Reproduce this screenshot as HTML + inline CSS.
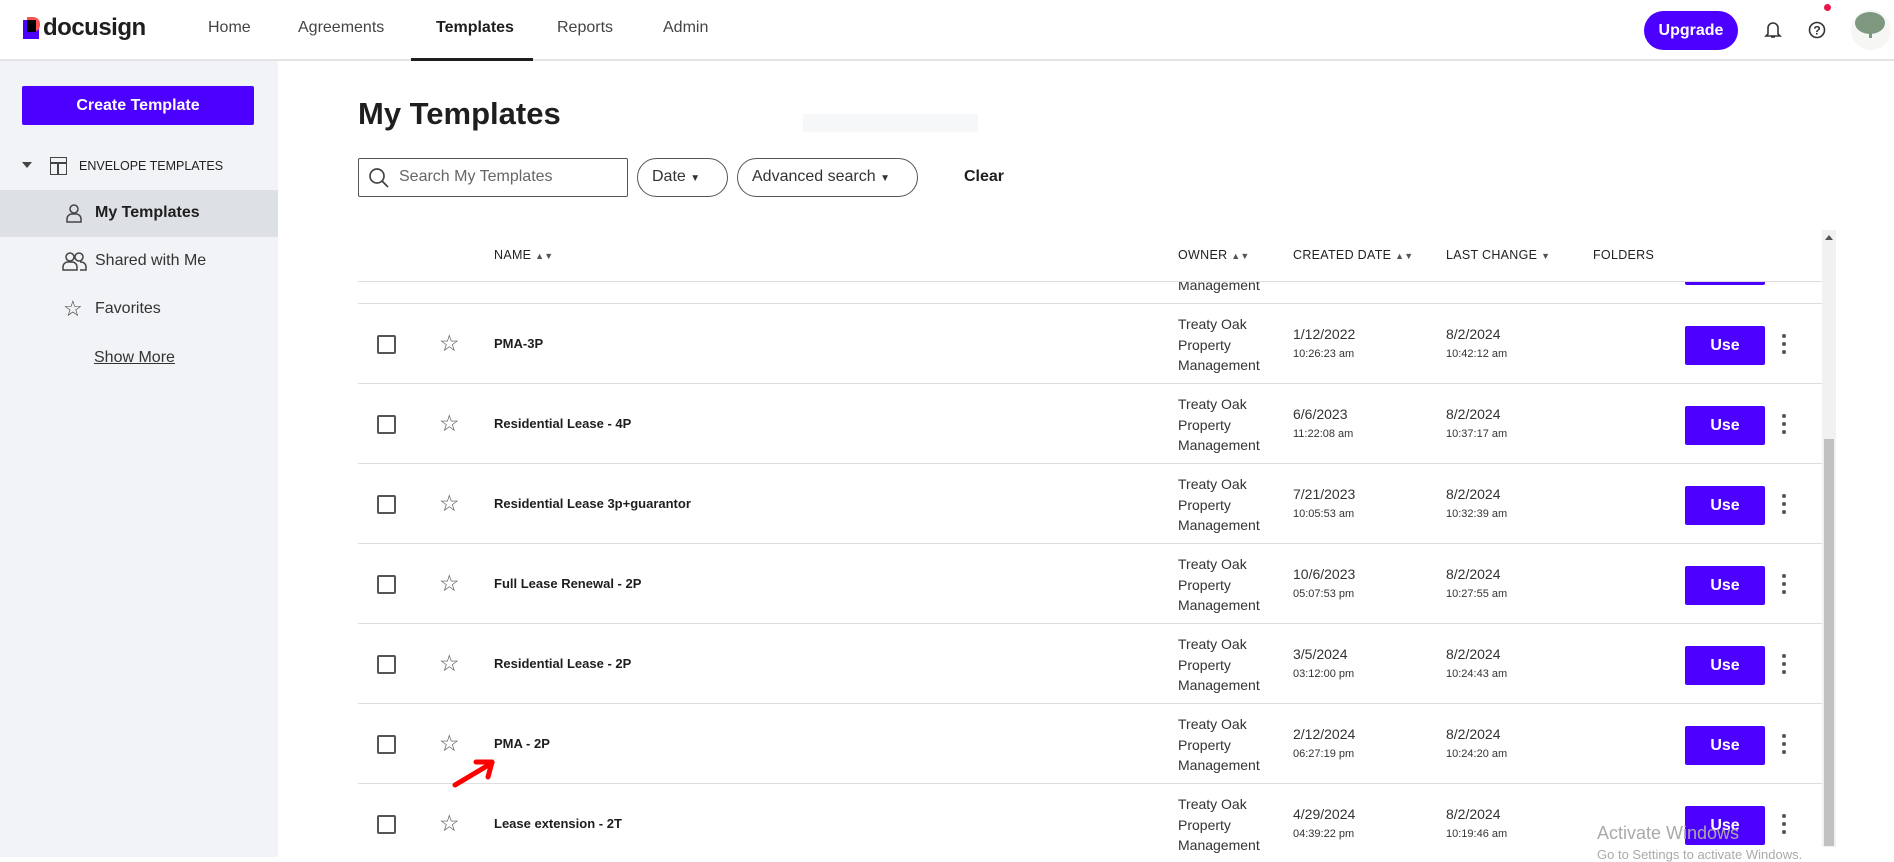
<!DOCTYPE html>
<html><head><meta charset="utf-8"><style>
*{box-sizing:border-box;margin:0;padding:0}
body{width:1894px;height:857px;overflow:hidden;background:#fff;font-family:"Liberation Sans",sans-serif;color:#1e1e1e;position:relative}
.a{position:absolute}
.hdr{left:0;top:0;width:1894px;height:61px;border-bottom:2px solid #e4e4e4;background:#fff}
.nav{top:19px;font-size:16px;color:#444}
.side{left:0;top:61px;width:278px;height:796px;background:#f1f3f6}
.btn{background:#4c00ff;color:#fff;font-weight:bold;text-align:center;border-radius:2px}
.pill{border:1px solid #555;border-radius:20px;height:39px;top:158px;font-size:16px;color:#333;padding:9px 14px}
.th{top:248px;font-size:12.5px;color:#222;letter-spacing:.3px}
.row{left:0;width:1464px;height:80px;border-bottom:1px solid #ddd}
.cb{left:19px;top:31px;width:19px;height:19px;border:2px solid #555;border-radius:2px}
.star{left:81px;top:26px;font-size:23px;color:#555}
.nm{left:136px;top:32px;font-weight:bold;font-size:13px}
.ow{left:820px;top:10px;font-size:14px;line-height:20.5px;color:#333}
.dt{font-size:14px;color:#333;top:22px}
.tm{font-size:11px;color:#333;top:44px}
.use{left:1327px;top:22px;width:80px;height:39px;line-height:39px;font-size:16px}
.keb{left:1424px;top:30px;width:4px}
.keb i{display:block;width:4px;height:4px;border-radius:2px;background:#555;margin-bottom:4px}
</style></head><body>
<div class="a hdr"></div>
<div class="a" style="left:23px;top:20px;width:16px;height:19px;background:#4c00ff"></div>
<div class="a" style="left:27px;top:17px;width:13px;height:15px;background:#ff5252;border-radius:0 7px 7px 0"></div>
<div class="a" style="left:27px;top:20px;width:9px;height:12px;background:#000"></div>
<div class="a" style="left:43px;top:14px;font-size:24px;font-weight:bold;letter-spacing:-.5px">docusign</div>
<div class="a nav" style="left:208px">Home</div>
<div class="a nav" style="left:298px">Agreements</div>
<div class="a nav" style="left:436px;color:#1e1e1e;font-weight:bold">Templates</div>
<div class="a" style="left:411px;top:58px;width:122px;height:3px;background:#1e1e1e"></div>
<div class="a nav" style="left:557px">Reports</div>
<div class="a nav" style="left:663px">Admin</div>
<div class="a btn" style="left:1644px;top:11px;width:94px;height:39px;border-radius:20px;line-height:39px;font-size:16px">Upgrade</div>
<svg class="a" style="left:1764px;top:20px" width="18" height="20" viewBox="0 0 18 20"><path d="M4 14V8a5 5 0 0 1 10 0v6l2 2H2z M7 17h4" fill="none" stroke="#333" stroke-width="1.6"/></svg>
<svg class="a" style="left:1807px;top:20px" width="20" height="20"><circle cx="10" cy="10" r="7.5" fill="none" stroke="#333" stroke-width="1.6"/><text x="10" y="14.5" font-size="12" font-weight="bold" text-anchor="middle" fill="#333" font-family="Liberation Sans">?</text></svg>
<div class="a" style="left:1824px;top:4px;width:7px;height:7px;border-radius:4px;background:#e8174a"></div>
<div class="a" style="left:1851px;top:10px;width:40px;height:40px;border-radius:20px;background:#f6f6f4"></div>
<div class="a" style="left:1855px;top:12px;width:30px;height:22px;border-radius:50%;background:#7e9880"></div>
<div class="a" style="left:1869px;top:30px;width:3px;height:8px;background:#7e9880"></div>

<div class="a side"></div>
<div class="a btn" style="left:22px;top:86px;width:232px;height:39px;line-height:39px;font-size:16px">Create Template</div>
<div class="a" style="left:22px;top:162px;border-left:5px solid transparent;border-right:5px solid transparent;border-top:6px solid #444"></div>
<div class="a" style="left:50px;top:157px;width:17px;height:18px;border:1.5px solid #444"></div>
<div class="a" style="left:50px;top:162px;width:17px;height:1.5px;background:#444"></div>
<div class="a" style="left:57px;top:162px;width:1.5px;height:13px;background:#444"></div>
<div class="a" style="left:79px;top:159px;font-size:12.5px;color:#222">ENVELOPE TEMPLATES</div>
<div class="a" style="left:0;top:190px;width:278px;height:47px;background:#dde0e4"></div>
<svg class="a" style="left:65px;top:203px" width="18" height="20"><circle cx="9" cy="6" r="4" fill="none" stroke="#444" stroke-width="1.5"/><path d="M2 19v-3a5 5 0 0 1 5-5h4a5 5 0 0 1 5 5v3z" fill="none" stroke="#444" stroke-width="1.5"/></svg>
<div class="a" style="left:95px;top:204px;font-size:16px;font-weight:bold">My Templates</div>
<svg class="a" style="left:62px;top:251px" width="26" height="20"><circle cx="8" cy="6" r="4" fill="none" stroke="#444" stroke-width="1.5"/><path d="M1 19v-3a5 5 0 0 1 5-5h4a5 5 0 0 1 5 5v3z" fill="none" stroke="#444" stroke-width="1.5"/><circle cx="17" cy="6" r="4" fill="none" stroke="#444" stroke-width="1.5"/><path d="M18 11h1a5 5 0 0 1 5 5v3h-6" fill="none" stroke="#444" stroke-width="1.5"/></svg>
<div class="a" style="left:95px;top:252px;font-size:16px;color:#333">Shared with Me</div>
<div class="a" style="left:63px;top:296px;font-size:22px;color:#444">☆</div>
<div class="a" style="left:95px;top:300px;font-size:16px;color:#333">Favorites</div>
<div class="a" style="left:94px;top:349px;font-size:16px;color:#333;text-decoration:underline">Show More</div>

<div class="a" style="left:358px;top:96px;font-size:31px;font-weight:bold">My Templates</div>
<div class="a" style="left:803px;top:114px;width:175px;height:18px;background:#f6f7f9"></div>
<div class="a" style="left:358px;top:158px;width:270px;height:39px;border:1px solid #555;border-radius:2px"></div>
<svg class="a" style="left:368px;top:167px" width="22" height="22"><circle cx="9" cy="9" r="7" fill="none" stroke="#444" stroke-width="1.7"/><path d="M14 14l6 6" stroke="#444" stroke-width="1.8"/></svg>
<div class="a" style="left:399px;top:168px;font-size:16px;color:#666">Search My Templates</div>
<div class="a pill" style="left:637px;width:91px">Date <span style="font-size:10px">▼</span></div>
<div class="a pill" style="left:737px;width:181px">Advanced search <span style="font-size:10px">▼</span></div>
<div class="a" style="left:964px;top:168px;font-size:16px;font-weight:bold">Clear</div>

<div class="a" style="left:358px;top:282px;width:1464px;height:575px;overflow:hidden">
 <div class="a row" style="top:-58px"><div class="a ow">Treaty Oak<br>Property<br>Management</div><div class="a btn use">Use</div></div>
 <div class="a row" style="top:22px"><div class="a cb"></div><div class="a star">☆</div><div class="a nm">PMA-3P</div><div class="a ow">Treaty Oak<br>Property<br>Management</div><div class="a dt" style="left:935px">1/12/2022</div><div class="a tm" style="left:935px">10:26:23 am</div><div class="a dt" style="left:1088px">8/2/2024</div><div class="a tm" style="left:1088px">10:42:12 am</div><div class="a btn use">Use</div><div class="a keb"><i></i><i></i><i></i></div></div>
 <div class="a row" style="top:102px"><div class="a cb"></div><div class="a star">☆</div><div class="a nm">Residential Lease - 4P</div><div class="a ow">Treaty Oak<br>Property<br>Management</div><div class="a dt" style="left:935px">6/6/2023</div><div class="a tm" style="left:935px">11:22:08 am</div><div class="a dt" style="left:1088px">8/2/2024</div><div class="a tm" style="left:1088px">10:37:17 am</div><div class="a btn use">Use</div><div class="a keb"><i></i><i></i><i></i></div></div>
 <div class="a row" style="top:182px"><div class="a cb"></div><div class="a star">☆</div><div class="a nm">Residential Lease 3p+guarantor</div><div class="a ow">Treaty Oak<br>Property<br>Management</div><div class="a dt" style="left:935px">7/21/2023</div><div class="a tm" style="left:935px">10:05:53 am</div><div class="a dt" style="left:1088px">8/2/2024</div><div class="a tm" style="left:1088px">10:32:39 am</div><div class="a btn use">Use</div><div class="a keb"><i></i><i></i><i></i></div></div>
 <div class="a row" style="top:262px"><div class="a cb"></div><div class="a star">☆</div><div class="a nm">Full Lease Renewal - 2P</div><div class="a ow">Treaty Oak<br>Property<br>Management</div><div class="a dt" style="left:935px">10/6/2023</div><div class="a tm" style="left:935px">05:07:53 pm</div><div class="a dt" style="left:1088px">8/2/2024</div><div class="a tm" style="left:1088px">10:27:55 am</div><div class="a btn use">Use</div><div class="a keb"><i></i><i></i><i></i></div></div>
 <div class="a row" style="top:342px"><div class="a cb"></div><div class="a star">☆</div><div class="a nm">Residential Lease - 2P</div><div class="a ow">Treaty Oak<br>Property<br>Management</div><div class="a dt" style="left:935px">3/5/2024</div><div class="a tm" style="left:935px">03:12:00 pm</div><div class="a dt" style="left:1088px">8/2/2024</div><div class="a tm" style="left:1088px">10:24:43 am</div><div class="a btn use">Use</div><div class="a keb"><i></i><i></i><i></i></div></div>
 <div class="a row" style="top:422px"><div class="a cb"></div><div class="a star">☆</div><div class="a nm">PMA - 2P</div><div class="a ow">Treaty Oak<br>Property<br>Management</div><div class="a dt" style="left:935px">2/12/2024</div><div class="a tm" style="left:935px">06:27:19 pm</div><div class="a dt" style="left:1088px">8/2/2024</div><div class="a tm" style="left:1088px">10:24:20 am</div><div class="a btn use">Use</div><div class="a keb"><i></i><i></i><i></i></div></div>
 <div class="a row" style="top:502px"><div class="a cb"></div><div class="a star">☆</div><div class="a nm">Lease extension - 2T</div><div class="a ow">Treaty Oak<br>Property<br>Management</div><div class="a dt" style="left:935px">4/29/2024</div><div class="a tm" style="left:935px">04:39:22 pm</div><div class="a dt" style="left:1088px">8/2/2024</div><div class="a tm" style="left:1088px">10:19:46 am</div><div class="a btn use">Use</div><div class="a keb"><i></i><i></i><i></i></div></div>
</div>
<div class="a" style="left:358px;top:230px;width:1464px;height:52px;background:#fff;border-bottom:1px solid #ddd"></div>
<div class="a th" style="left:494px">NAME <span style="font-size:9px;color:#555">▲▼</span></div>
<div class="a th" style="left:1178px">OWNER <span style="font-size:9px;color:#555">▲▼</span></div>
<div class="a th" style="left:1293px">CREATED DATE <span style="font-size:9px;color:#555">▲▼</span></div>
<div class="a th" style="left:1446px">LAST CHANGE <span style="font-size:9px;color:#555">▼</span></div>
<div class="a th" style="left:1593px">FOLDERS</div>
<div class="a" style="left:1822px;top:230px;width:14px;height:617px;background:#f1f1f1"></div>
<div class="a" style="left:1824px;top:439px;width:10px;height:407px;background:#c1c1c1"></div>
<div class="a" style="left:1825px;top:235px;border-left:4px solid transparent;border-right:4px solid transparent;border-bottom:5px solid #555"></div>
<svg class="a" style="left:450px;top:755px" width="50" height="36"><path d="M5 30L42 8M26 7L42 7L38 22" fill="none" stroke="#f00" stroke-width="5" stroke-linecap="round" stroke-linejoin="round"/></svg>
<div class="a" style="left:1597px;top:823px;font-size:18px;color:#aaa">Activate Windows</div>
<div class="a" style="left:1597px;top:847px;font-size:13px;color:#aaa">Go to Settings to activate Windows.</div>
</body></html>
